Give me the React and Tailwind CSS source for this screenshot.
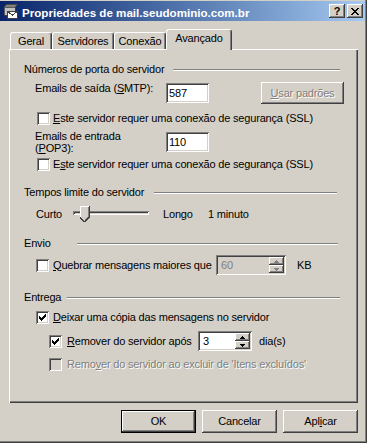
import React from "react";

const RAISED =
  "shadow-[inset_-1px_-1px_#404040,inset_1px_1px_#ffffff,inset_-2px_-2px_#808080,inset_2px_2px_#d4d0c8]";
const SUNKEN =
  "shadow-[inset_1px_1px_#808080,inset_-1px_-1px_#ffffff,inset_2px_2px_#404040,inset_-2px_-2px_#d4d0c8]";
const DIS = "text-[#808080] [text-shadow:1px_1px_0_#ffffff]";

function Check() {
  const cols = [2, 3, 4, 3, 2, 1, 0];
  return (
    <svg width="7" height="7" viewBox="0 0 7 7" shapeRendering="crispEdges">
      {cols.map((y, x) => (
        <rect key={x} x={x} y={y} width="1" height="3" fill="#000" />
      ))}
    </svg>
  );
}

function Checkbox({ checked, disabled }) {
  return (
    <div
      className={`w-[13px] h-[13px] shrink-0 flex items-center justify-center ${SUNKEN} ${
        disabled ? "bg-[#d4d0c8]" : "bg-white"
      }`}
    >
      {checked && <Check />}
    </div>
  );
}

function GroupHeader({ label, labelClass, padClass, mtClass }) {
  return (
    <div className={`flex items-center h-[13px] pl-[15px] ${padClass} ${mtClass}`}>
      <span className={`shrink-0 ${labelClass}`}>{label}</span>
      <div className="flex-1 h-[2px] border-t border-t-[#808080] border-b border-b-white" />
    </div>
  );
}

function Arrow({ up, disabled }) {
  const fill = disabled ? "#808080" : "#000";
  return (
    <svg width="5" height="3" viewBox="0 0 5 3" shapeRendering="crispEdges">
      {up ? (
        <path d="M2 0h1v1h1v1h1v1H0V2h1V1h1z" fill={fill} />
      ) : (
        <path d="M0 0h5v1H4v1H3v1H2V2H1V1H0z" fill={fill} />
      )}
    </svg>
  );
}

function Spinner({ value, widthClass, disabled }) {
  return (
    <div
      className={`${widthClass} h-[20px] shrink-0 flex p-[2px] ${SUNKEN} ${
        disabled ? "bg-[#d4d0c8]" : "bg-white"
      }`}
    >
      <div className={`flex-1 flex items-center pl-[3px] ${disabled ? "text-[#808080]" : ""}`}>
        {value}
      </div>
      <div className="w-[15px] flex flex-col">
        <div className={`flex-1 bg-[#d4d0c8] flex items-center justify-center ${RAISED}`}>
          <Arrow up disabled={disabled} />
        </div>
        <div className={`flex-1 bg-[#d4d0c8] flex items-center justify-center ${RAISED}`}>
          <Arrow disabled={disabled} />
        </div>
      </div>
    </div>
  );
}

function TitleIcon() {
  return (
    <svg width="16" height="16" viewBox="0 0 16 16" shapeRendering="crispEdges">
      <polygon points="1,4 4,1 15,1 12,4" fill="#808080" stroke="#404040" strokeWidth="0.8" />
      <rect x="1" y="4" width="11" height="8" fill="#c0c0c0" stroke="#404040" strokeWidth="0.8" />
      <rect x="4.5" y="8.5" width="10" height="6.5" fill="#ffffff" stroke="#404040" strokeWidth="1" />
      <polyline points="4.5,8.5 9.5,12 14.5,8.5" fill="none" stroke="#404040" strokeWidth="1" />
    </svg>
  );
}

function Tab({ label, widthClass, selected }) {
  return (
    <div
      className={`${widthClass} shrink-0 flex items-center justify-center rounded-t-[3px] border-t border-l border-t-white border-l-white border-r border-r-[#404040] shadow-[inset_-1px_0_#808080] bg-[#d4d0c8] ${
        selected ? "h-[21px] -mb-px relative z-10 pb-[3px]" : "h-[17px]"
      }`}
    >
      {label}
    </div>
  );
}

function Btn({ children, def }) {
  return (
    <div
      className={`w-[75px] h-[23px] flex items-center justify-center bg-[#d4d0c8] ${RAISED} ${
        def ? "border border-black" : ""
      }`}
    >
      {children}
    </div>
  );
}

export default function App() {
  return (
    <div className="w-[367px] h-[443px] bg-[#d4d0c8] overflow-hidden font-['Liberation_Sans',Arial,sans-serif] text-[11px] leading-[13px] text-black tracking-[-0.18px] shadow-[inset_-1px_-1px_#404040,inset_-2px_-2px_#808080] flex flex-col">
      {/* title bar */}
      <div className="mt-px mr-[2px] h-[20px] shrink-0 bg-linear-to-r from-[#0a246a] to-[#a6caf0] flex items-center pl-[3px] pr-[2px]">
        <TitleIcon />
        <span className="ml-[3px] pt-[2px] font-bold text-white text-[11.6px] tracking-normal">
          Propriedades de mail.seudominio.com.br
        </span>
        <div className="flex-1" />
        <div className={`w-[16px] h-[14px] bg-[#d4d0c8] flex items-center justify-center font-bold text-[11px] leading-none ${RAISED}`}>
          ?
        </div>
        <div className={`ml-[2px] w-[16px] h-[14px] bg-[#d4d0c8] flex items-center justify-center ${RAISED}`}>
          <svg width="8" height="7" viewBox="0 0 8 7" shapeRendering="crispEdges">
            <path
              d="M0 0h2v1h1v1h2V1h1V0h2v1H7v1H6v1H5v1h1v1h1v1h1v1H6V6H5V5H3v1H2v1H0V6h1V5h1V4h1V3H2V2H1V1H0z"
              fill="#000"
            />
          </svg>
        </div>
      </div>

      {/* tabs */}
      <div className="mt-[8px] h-[20px] shrink-0 flex items-end pl-[10px]">
        <Tab label="Geral" widthClass="w-[42px]" />
        <Tab label="Servidores" widthClass="w-[62px]" />
        <Tab label="Conexão" widthClass="w-[52px]" />
        <Tab label="Avançado" widthClass="w-[66px]" selected />
      </div>

      {/* panel */}
      <div className="ml-[9px] w-[349px] h-[354px] shrink-0 flex flex-col pt-[14px] shadow-[inset_1px_1px_#ffffff,inset_-1px_-1px_#404040,inset_-2px_-2px_#808080]">
        <GroupHeader
          label="Números de porta do servidor"
          labelClass="w-[149px]"
          padClass="pr-[18px]"
          mtClass="mt-0"
        />

        <div className="mt-[6px] h-[22px] flex items-start pl-[26px]">
          <span className="w-[131px] shrink-0">
            Emails de saída (<u>S</u>MTP):
          </span>
          <div className={`mt-px w-[43px] h-[20px] bg-white flex items-center pl-[3px] ${SUNKEN}`}>587</div>
          <div className={`ml-[52px] w-[83px] h-[22px] bg-[#d4d0c8] flex items-center justify-center ${RAISED} ${DIS}`}>
            <span>
              <u>U</u>sar padrões
            </span>
          </div>
        </div>

        <div className="mt-[8px] h-[13px] flex items-center pl-[28px] gap-[3px]">
          <Checkbox />
          <span>
            <u>E</u>ste servidor requer uma conexão de segurança (SSL)
          </span>
        </div>

        <div className="mt-[5px] h-[24px] flex items-start pl-[26px]">
          <span className="w-[131px] shrink-0 leading-[12px]">
            Emails de entrada
            <br />(<u>P</u>OP3):
          </span>
          <div className={`mt-[2px] w-[43px] h-[20px] bg-white flex items-center pl-[3px] ${SUNKEN}`}>110</div>
        </div>

        <div className="mt-[4px] h-[13px] flex items-center pl-[28px] gap-[3px]">
          <Checkbox />
          <span>
            E<u>s</u>te servidor requer uma conexão de segurança (SSL)
          </span>
        </div>

        <GroupHeader
          label="Tempos limite do servidor"
          labelClass="w-[130px]"
          padClass="pr-[21px]"
          mtClass="mt-[15px]"
        />

        <div className="mt-[7px] h-[16px] flex items-center pl-[27px]">
          <span className="w-[37px] shrink-0">Curto</span>
          <div className="relative w-[76px] h-[16px] shrink-0">
            <div className="absolute left-0 right-0 top-[5px] h-[4px] bg-[#d4d0c8] shadow-[inset_1px_1px_#808080,inset_-1px_-1px_#ffffff,inset_2px_2px_#404040]" />
            <svg
              className="absolute left-[7px] top-0"
              width="10"
              height="16"
              viewBox="0 0 10 16"
              shapeRendering="crispEdges"
            >
              <polygon points="0,0 9,0 9,11 5,15 4,15 0,11" fill="#d4d0c8" />
              <polyline points="0.5,11 0.5,0.5 9,0.5" fill="none" stroke="#ffffff" strokeWidth="1" />
              <polyline points="9.5,0 9.5,11 5,15.5 4,15.5 0,11.5" fill="none" stroke="#404040" strokeWidth="1" />
              <polyline points="8.5,1 8.5,10.6 4.6,14.5" fill="none" stroke="#808080" strokeWidth="1" />
            </svg>
          </div>
          <span className="ml-[14px] w-[45px] shrink-0">Longo</span>
          <span>1 minuto</span>
        </div>

        <GroupHeader label="Envio" labelClass="w-[53px]" padClass="pr-[20px]" mtClass="mt-[15px]" />

        <div className="mt-[5px] h-[20px] flex items-center pl-[27px]">
          <Checkbox />
          <span className="ml-[4px] w-[163px] shrink-0">
            <u>Q</u>uebrar mensagens maiores que
          </span>
          <Spinner value="60" widthClass="w-[70px]" disabled />
          <span className="ml-[11px]">KB</span>
        </div>

        <GroupHeader label="Entrega" labelClass="w-[43px]" padClass="pr-[18px]" mtClass="mt-[16px]" />

        <div className="mt-[7px] h-[13px] flex items-center pl-[27px] gap-[4px]">
          <Checkbox checked />
          <span>
            <u>D</u>eixar uma cópia das mensagens no servidor
          </span>
        </div>

        <div className="mt-[7px] h-[20px] flex items-center pl-[40px]">
          <Checkbox checked />
          <span className="ml-[5px] w-[131px] shrink-0">
            <u>R</u>emover do servidor após
          </span>
          <Spinner value="3" widthClass="w-[54px]" />
          <span className="ml-[7px]">dia(s)</span>
        </div>

        <div className="mt-[7px] h-[13px] flex items-center pl-[40px] gap-[5px]">
          <Checkbox disabled />
          <span className={DIS}>
            Remo<u>v</u>er do servidor ao excluir de 'Itens excluídos'
          </span>
        </div>
      </div>

      {/* bottom buttons */}
      <div className="mt-[7px] flex justify-end gap-[6px] pr-[9px]">
        <Btn def>OK</Btn>
        <Btn>Cancelar</Btn>
        <Btn>
          <span>
            Apl<u>i</u>car
          </span>
        </Btn>
      </div>
    </div>
  );
}
